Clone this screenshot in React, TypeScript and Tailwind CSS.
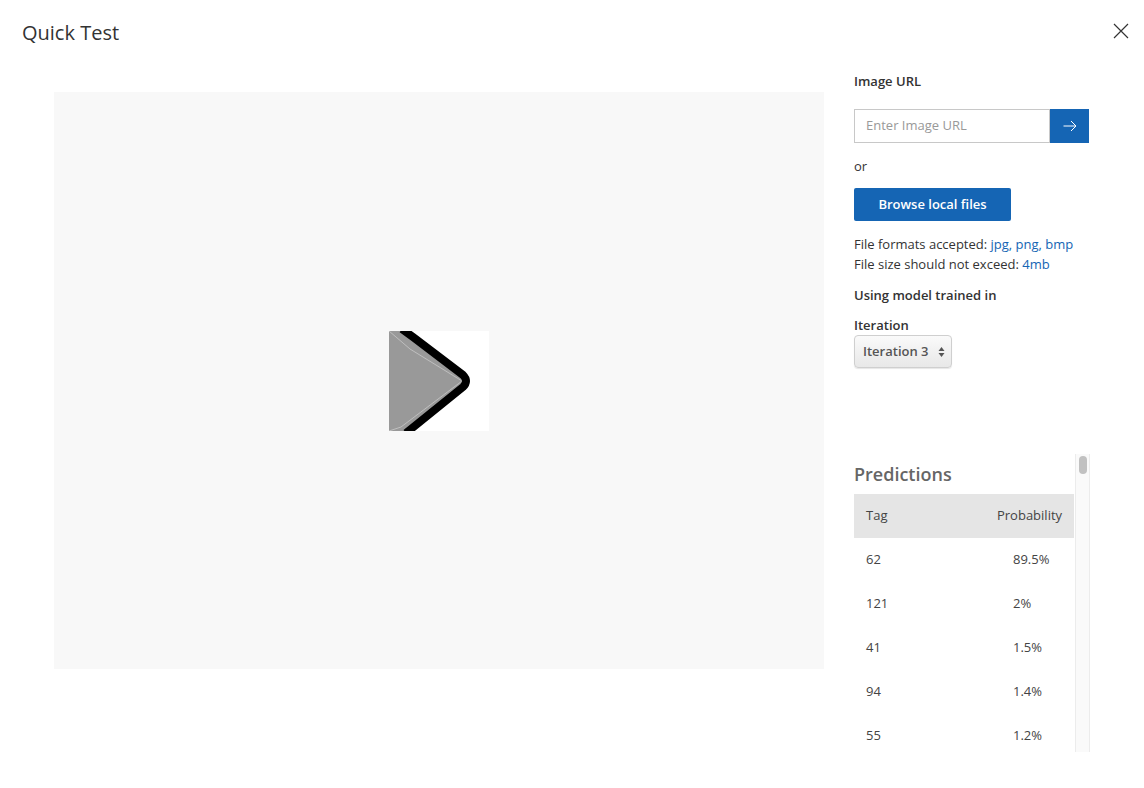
import React from "react";

const rows = [
  ["62", "89.5%"],
  ["121", "2%"],
  ["41", "1.5%"],
  ["94", "1.4%"],
  ["55", "1.2%"],
];

export default function App() {
  return (
    <div
      className="relative w-[1144px] h-[788px] bg-white text-[#333] overflow-hidden"
      style={{ fontFamily: '"Open Sans", "Noto Sans", sans-serif' }}
    >
      <div className="flex items-start justify-between">
        <h1 className="ml-[22px] mt-[19px] text-[20px] leading-[28px] text-[#333]">Quick Test</h1>
        <button className="mt-[23px] mr-[15px] w-[16px] h-[16px] flex items-center justify-center">
          <svg width="16" height="16" viewBox="0 0 16 16">
            <path d="M1 1 L15 15 M15 1 L1 15" stroke="#333" strokeWidth="1.2" fill="none" />
          </svg>
        </button>
      </div>
      <div className="flex mt-[27px]">
        <div className="ml-[54px] w-[770px] h-[577px] mt-[18px] bg-[#f8f8f8] flex items-center justify-center">
          <svg width="100" height="100" viewBox="0 0 100 100">
            <rect x="0" y="0" width="100" height="100" fill="#fff" />
            <polygon points="0,0 14,0 78,50 18,100 0,100" fill="#999" />
            <path d="M0 0 L21 18 L73 50 L12 96 L0 100" stroke="#c8c8c8" strokeWidth="0.8" fill="none" />
            <path d="M13 -2 L24 6 L74 44 Q80 50 74 56 L17 102" stroke="#000" strokeWidth="8" fill="none" strokeLinejoin="round" />
          </svg>
        </div>
        <div className="ml-[30px] w-[236px] flex flex-col">
          <div className="text-[13px] font-semibold leading-[18px] mt-[-2px]">Image URL</div>
          <div className="flex mt-[19px] h-[34px] w-[235px]">
            <div className="flex-1 border border-[#c8c8c8] flex items-center pl-[11px] text-[13px] text-[#999]">
              Enter Image URL
            </div>
            <div className="w-[39px] bg-[#1565b4] flex items-center justify-center">
              <svg width="14" height="12" viewBox="0 0 14 12">
                <path d="M0.5 6 H13 M8 1 L13 6 L8 11" stroke="#fff" strokeWidth="1" fill="none" />
              </svg>
            </div>
          </div>
          <div className="text-[13px] leading-[18px] mt-[14px]">or</div>
          <button className="mt-[13px] w-[157px] h-[33px] bg-[#1565b4] text-white text-[13px] font-semibold rounded-[2px]">
            Browse local files
          </button>
          <div className="mt-[13px] text-[13px] leading-[20px]">
            <div>
              File formats accepted: <span className="text-[#1565b4]">jpg, png, bmp</span>
            </div>
            <div>
              File size should not exceed: <span className="text-[#1565b4]">4mb</span>
            </div>
          </div>
          <div className="mt-[12px] text-[13px] font-semibold leading-[18px]">Using model trained in</div>
          <div className="mt-[12px] text-[13px] font-semibold leading-[18px]">Iteration</div>
          <div className="mt-[1px] w-[98px] h-[33px] rounded-[4px] border border-[#cfcfcf] bg-gradient-to-b from-[#fafafa] to-[#e8e8e8] shadow-[0_1px_1px_rgba(0,0,0,0.1)] flex items-center justify-between pl-[8px] pr-[6px] text-[13px] font-semibold text-[#555]">
            <span>Iteration 3</span>
            <svg width="7" height="12" viewBox="0 0 7 12">
              <path d="M3.5 1 L6.5 5 H0.5 Z M3.5 11 L6.5 7 H0.5 Z" fill="#555" />
            </svg>
          </div>
          <div className="mt-[86px] flex h-[298px]">
            <div className="w-[221px] flex flex-col overflow-hidden">
              <div className="mt-[8px] text-[18px] font-semibold text-[#666] leading-[24px]">Predictions</div>
              <div className="mt-[8px] h-[44px] shrink-0 bg-[#e5e5e5] flex items-center justify-between px-[12px] text-[13px] text-[#444]">
                <span>Tag</span>
                <span>Probability</span>
              </div>
              {rows.map(([t, p]) => (
                <div key={t} className="h-[44px] shrink-0 flex items-center text-[13px] text-[#444]">
                  <span className="w-[159px] pl-[12px]">{t}</span>
                  <span>{p}</span>
                </div>
              ))}
            </div>
            <div className="w-[15px] h-full ml-[1px] bg-[#fafafa] border-x border-[#ececec] flex justify-center pt-[2px]">
              <div className="w-[8px] h-[18px] rounded-[4px] bg-[#c1c1c1]" />
            </div>
          </div>
        </div>
      </div>
    </div>
  );
}
